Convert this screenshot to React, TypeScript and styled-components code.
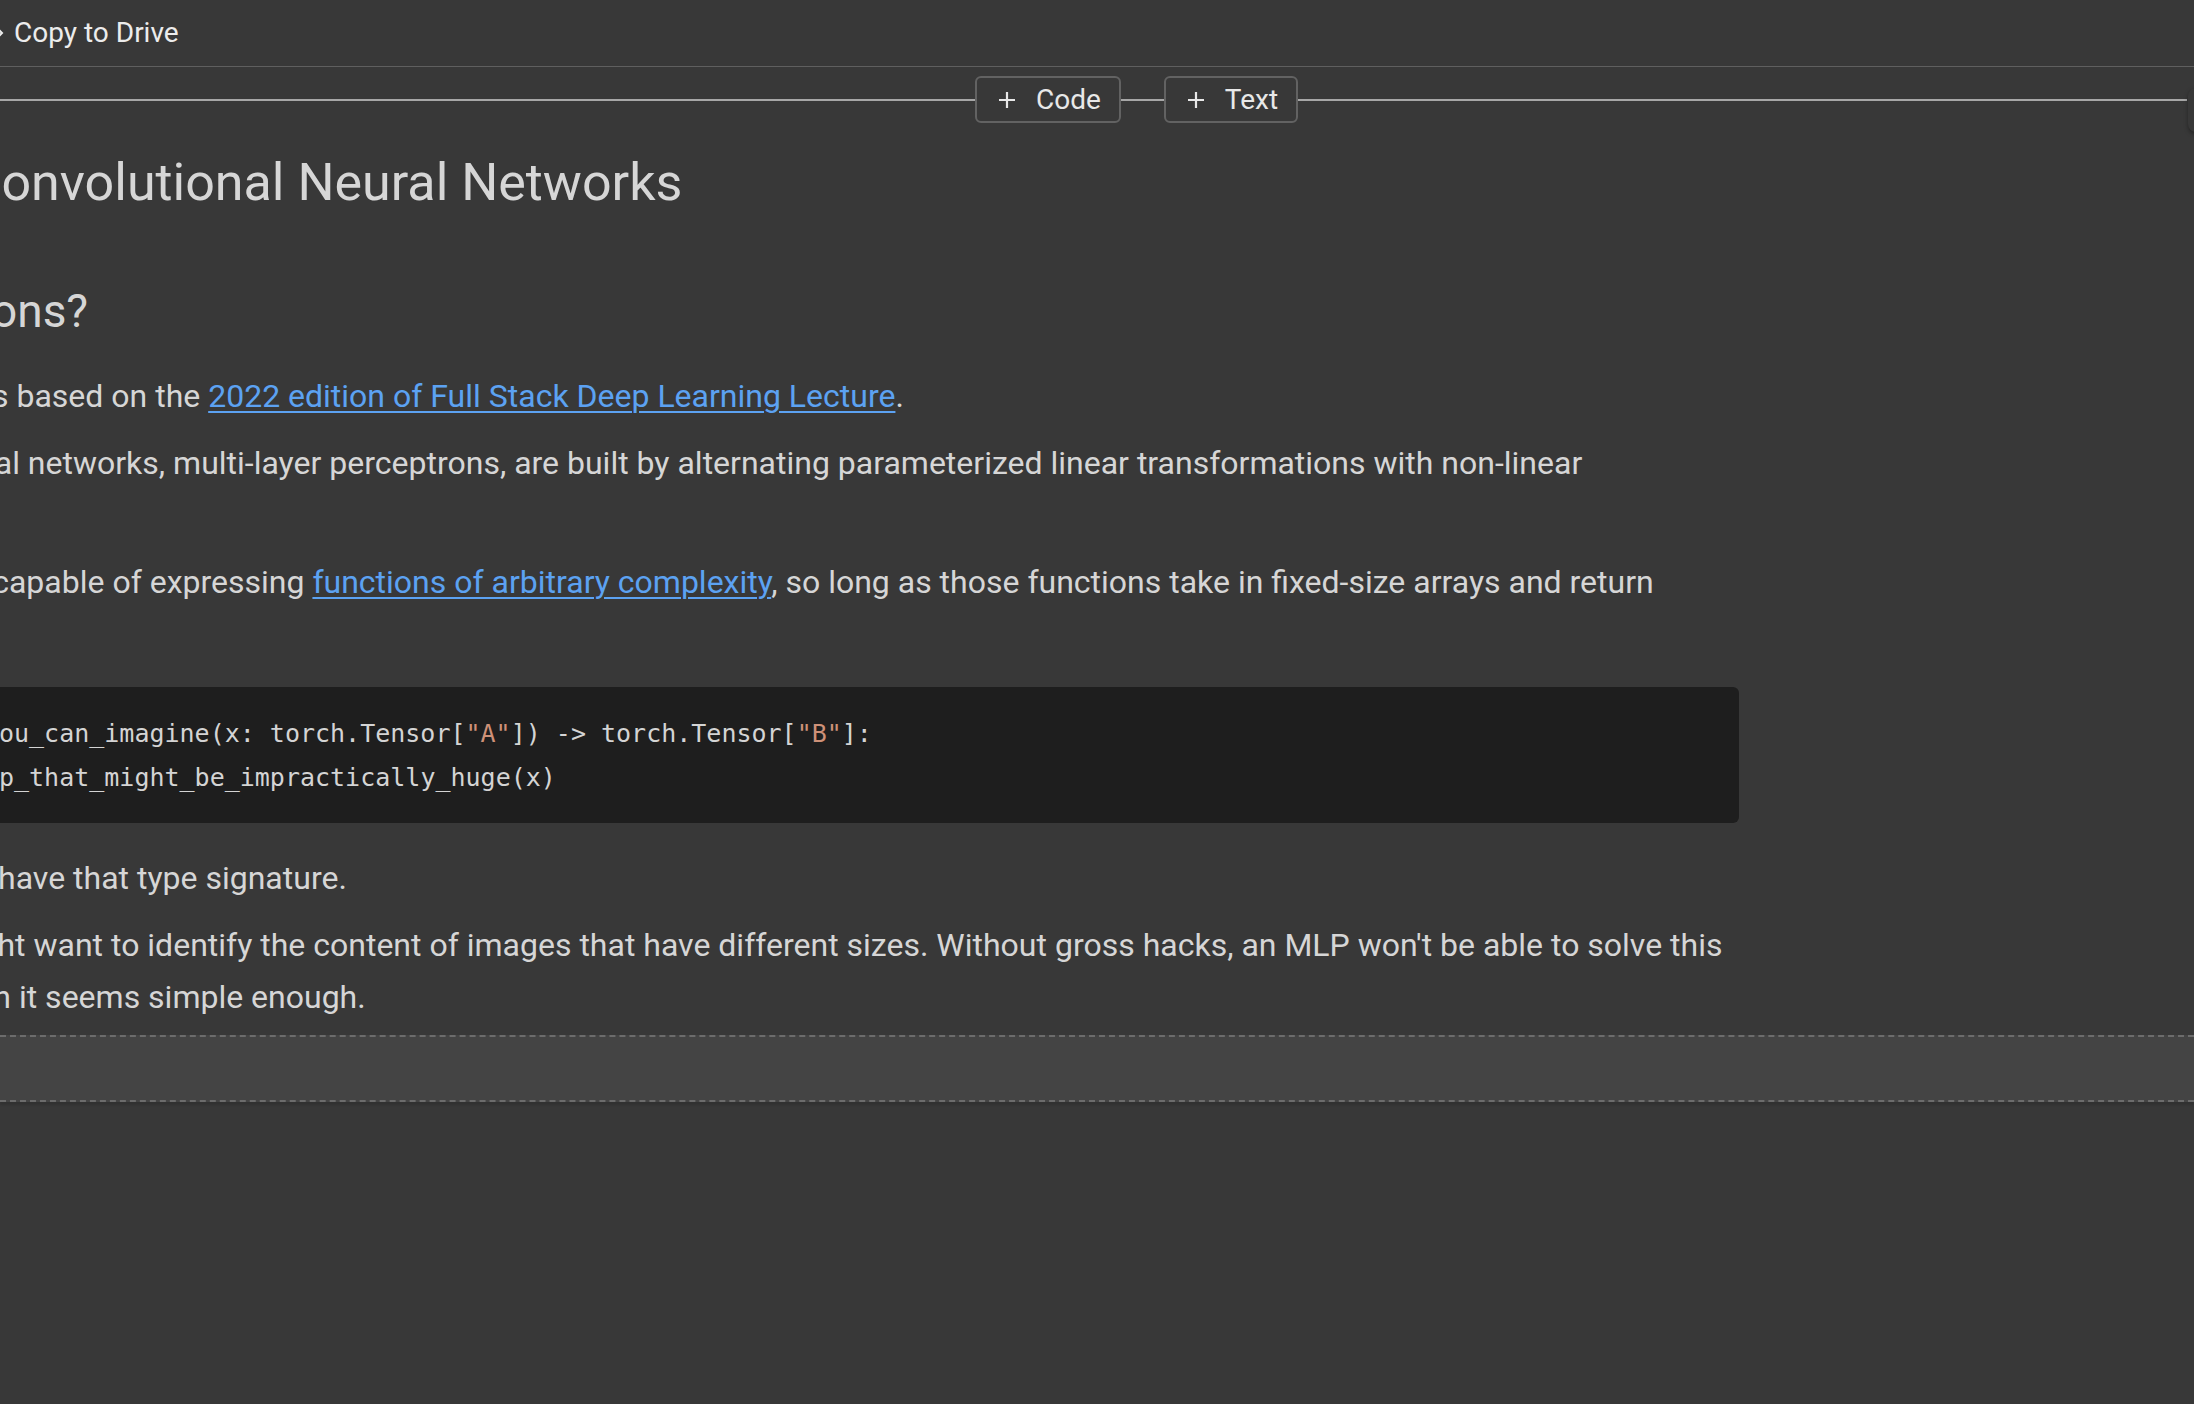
import React from "react";
import styled, { createGlobalStyle } from "styled-components";

const GlobalStyle = createGlobalStyle`
  html, body {
    margin: 0;
    padding: 0;
    background: #383838;
  }
  body {
    font-family: Roboto, "Noto Sans", "Liberation Sans", sans-serif;
    overflow: hidden;
  }
`;

const Page = styled.div`
  position: relative;
  width: 2194px;
  height: 1404px;
  overflow: hidden;
  background: #383838;
  display: flex;
  flex-direction: column;
`;

const TopBar = styled.header`
  flex: 0 0 66px;
  display: flex;
  align-items: center;
  border-bottom: 1px solid #5f5f5f;
`;

const DriveButton = styled.div`
  display: flex;
  align-items: center;
  gap: 10px;
  margin-left: -14px;
  color: #ececec;
  font-size: 28px;
  line-height: 1;
`;

const AddRow = styled.div`
  flex: 0 0 65px;
  display: flex;
  align-items: center;
  padding-right: 7px;
`;

const Rule = styled.div<{ $w?: number }>`
  height: 2px;
  background: #a7a7a7;
  flex: ${(p) => (p.$w ? `0 0 ${p.$w}px` : "1 1 auto")};
`;

const AddButton = styled.button`
  display: flex;
  align-items: center;
  gap: 20px;
  height: 47px;
  padding: 0 18px 0 21px;
  box-sizing: border-box;
  background: #383838;
  border: 2px solid #626262;
  border-radius: 6px;
  color: #e8e8e8;
  font-family: Roboto, sans-serif;
  font-size: 28px;
  font-weight: 400;
  cursor: pointer;
`;

const CellToolbar = styled.div`
  position: absolute;
  top: 88px;
  left: 2188px;
  width: 200px;
  height: 44px;
  background: #383838;
  border-radius: 8px;
  box-shadow: 0 2px 4px rgba(0, 0, 0, 0.35);
`;

const TextCell = styled.article`
  margin-left: -295px;
  width: 2031px;
  color: #d6d6d6;
  display: flex;
  flex-direction: column;
`;

const H1 = styled.h1`
  margin: 19px 0 0;
  font-size: 52px;
  line-height: 64px;
  font-weight: 400;
  white-space: nowrap;
`;

const H2 = styled.h2`
  margin: 69px 0 0;
  font-size: 46px;
  line-height: 54px;
  font-weight: 400;
  white-space: nowrap;
`;

const P = styled.p<{ $gap: number }>`
  margin: ${(p) => p.$gap}px 0 0;
  font-size: 32px;
  line-height: 52px;
`;

const Link = styled.a`
  color: #5ca2f2;
  text-decoration: underline;
  text-underline-offset: 4px;
  text-decoration-thickness: 2px;
`;

const CodeBlock = styled.pre`
  margin: 27px -3px 0 0;
  padding: 25px 23px 23px;
  background: #1e1e1e;
  border-radius: 6px;
  font-family: "DejaVu Sans Mono", "Liberation Mono", monospace;
  font-size: 25px;
  line-height: 44px;
  color: #d4d4d4;
  white-space: pre;
`;

const Tok = styled.span<{ $k: "kw" | "str" }>`
  color: ${(p) => (p.$k === "kw" ? "#569cd6" : "#ce9178")};
`;

const Placeholder = styled.div`
  margin-top: 12px;
  height: 67px;
  box-sizing: border-box;
  background: #444444;
  border-top: 2px dashed #6c6c6c;
  border-bottom: 2px dashed #6c6c6c;
  box-shadow: 0 3px 2px rgba(0, 0, 0, 0.12);
`;

const PlusIcon = () => (
  <svg width="18" height="18" viewBox="0 0 18 18" fill="none" stroke="#e8e8e8" strokeWidth="2.2">
    <path d="M9 1v16M1 9h16" />
  </svg>
);

const DriveIcon = () => (
  <svg width="18" height="20" viewBox="0 0 18 20" fill="none" stroke="#ececec" strokeWidth="2">
    <path d="M2 4h8l6 6-6 6H2" />
  </svg>
);

export default function App() {
  return (
    <>
      <GlobalStyle />
      <Page>
        <TopBar>
          <DriveButton>
            <DriveIcon />
            <span>Copy to Drive</span>
          </DriveButton>
        </TopBar>
        <AddRow>
          <Rule $w={975} />
          <AddButton>
            <PlusIcon />
            Code
          </AddButton>
          <Rule $w={43} />
          <AddButton>
            <PlusIcon />
            Text
          </AddButton>
          <Rule />
        </AddRow>
        <CellToolbar />
        <TextCell>
          <H1>Lecture 3 / Convolutional Neural Networks</H1>
          <H2>Why convolutions?</H2>
          <P $gap={32}>
            The material below is based on the{" "}
            <Link href="#">2022 edition of Full Stack Deep Learning Lecture</Link>.
          </P>
          <P $gap={15}>
            The most basic neural networks, multi-layer perceptrons, are built by alternating parameterized linear
            transformations with non-linear transformations.
          </P>
          <P $gap={15}>
            This combination is capable of expressing{" "}
            <Link href="#">functions of arbitrary complexity</Link>, so long as those functions take in fixed-size
            arrays and return fixed-size arrays.
          </P>
          <CodeBlock>
            <Tok $k="kw">def</Tok> any_function_you_can_imagine(x: torch.Tensor[<Tok $k="str">"A"</Tok>]) -&gt; torch.Tensor[<Tok $k="str">"B"</Tok>]:
            {"\n"}    <Tok $k="kw">return</Tok> some_mlp_that_might_be_impractically_huge(x)
          </CodeBlock>
          <P $gap={29}>But not all functions have that type signature.</P>
          <P $gap={15}>
            For example, we might want to identify the content of images that have different sizes. Without gross
            hacks, an MLP won't be able to solve this problem, even though it seems simple enough.
          </P>
        </TextCell>
        <Placeholder />
      </Page>
    </>
  );
}
